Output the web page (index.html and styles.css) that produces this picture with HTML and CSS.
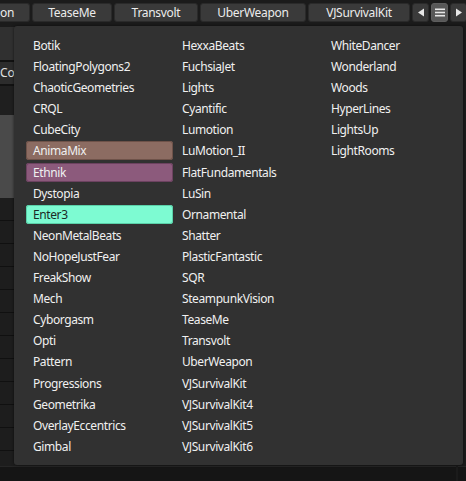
FILE: index.html
```html
<!DOCTYPE html>
<html>
<head>
<meta charset="utf-8">
<link rel="stylesheet" href="styles.css">
</head>
<body>
<div class="app">
  <div class="tabbar">
    <div class="tab tab-cut">on</div>
    <div class="tab w-tease">TeaseMe</div>
    <div class="tab w-trans">Transvolt</div>
    <div class="tab w-uber">UberWeapon</div>
    <div class="tab w-vj">VJSurvivalKit</div>
    <div class="tab icon-btn"><svg width="8" height="9" viewBox="0 0 8 9"><path d="M7 0.5 L1 4.5 L7 8.5 Z" fill="#e8e8e8"/></svg></div>
    <div class="tab icon-btn active"><svg width="10" height="9" viewBox="0 0 10 9"><rect x="0" y="0.5" width="10" height="1.6" fill="#e8e8e8"/><rect x="0" y="3.7" width="10" height="1.6" fill="#e8e8e8"/><rect x="0" y="6.9" width="10" height="1.6" fill="#e8e8e8"/></svg></div>
    <div class="tab icon-btn"><svg width="8" height="9" viewBox="0 0 8 9"><path d="M1 0.5 L7 4.5 L1 8.5 Z" fill="#e8e8e8"/></svg></div>
  </div>
  <div class="main">
    <div class="side">
      <div class="sec sec-a"></div>
      <div class="sec sec-b">Cor</div>
      <div class="sec sec-c"></div>
      <div class="sec sec-d"></div>
      <div class="rows">
        <div class="row"></div><div class="row"></div><div class="row"></div><div class="row"></div>
        <div class="row"></div><div class="row"></div><div class="row"></div><div class="row"></div>
        <div class="row"></div><div class="row"></div><div class="row"></div><div class="row"></div>
      </div>
    </div>
    <div class="content"></div>
  </div>
  <div class="bottom"><div class="bottom-bar"></div><div class="bottom-end"></div></div>

  <div class="popup">
    <div class="item">Botik</div>
    <div class="item">FloatingPolygons2</div>
    <div class="item">ChaoticGeometries</div>
    <div class="item">CRQL</div>
    <div class="item">CubeCity</div>
    <div class="item hl-anima">AnimaMix</div>
    <div class="item hl-ethnik">Ethnik</div>
    <div class="item">Dystopia</div>
    <div class="item hl-enter">Enter3</div>
    <div class="item">NeonMetalBeats</div>
    <div class="item">NoHopeJustFear</div>
    <div class="item">FreakShow</div>
    <div class="item">Mech</div>
    <div class="item">Cyborgasm</div>
    <div class="item">Opti</div>
    <div class="item">Pattern</div>
    <div class="item">Progressions</div>
    <div class="item">Geometrika</div>
    <div class="item">OverlayEccentrics</div>
    <div class="item">Gimbal</div>

    <div class="item">HexxaBeats</div>
    <div class="item">FuchsiaJet</div>
    <div class="item">Lights</div>
    <div class="item">Cyantific</div>
    <div class="item">Lumotion</div>
    <div class="item">LuMotion_II</div>
    <div class="item">FlatFundamentals</div>
    <div class="item">LuSin</div>
    <div class="item">Ornamental</div>
    <div class="item">Shatter</div>
    <div class="item">PlasticFantastic</div>
    <div class="item">SQR</div>
    <div class="item">SteampunkVision</div>
    <div class="item">TeaseMe</div>
    <div class="item">Transvolt</div>
    <div class="item">UberWeapon</div>
    <div class="item">VJSurvivalKit</div>
    <div class="item">VJSurvivalKit4</div>
    <div class="item">VJSurvivalKit5</div>
    <div class="item">VJSurvivalKit6</div>

    <div class="item">WhiteDancer</div>
    <div class="item">Wonderland</div>
    <div class="item">Woods</div>
    <div class="item">HyperLines</div>
    <div class="item">LightsUp</div>
    <div class="item">LightRooms</div>
  </div>
</div>
</body>
</html>
```
FILE: styles.css
```css
html, body {
  margin: 0;
  padding: 0;
  background: #1b1b1b;
  width: 466px;
  height: 481px;
  overflow: hidden;
}
body {
  font-family: "Noto Sans", "Open Sans", sans-serif;
  font-size: 12px;
  color: #e6e6e6;
}
.app {
  position: relative;
  width: 466px;
  height: 481px;
  display: flex;
  flex-direction: column;
}
.tabbar {
  display: flex;
  gap: 2px;
  height: 20px;
  padding-top: 3px;
  padding-bottom: 2px;
  background: #1b1b1b;
}
.tab {
  flex: none;
  height: 19px;
  background: #3a3a3a;
  border: 1px solid #2a2a2a;
  border-radius: 3px;
  box-sizing: border-box;
  display: flex;
  align-items: center;
  justify-content: center;
  color: #ececec;
  font-size: 12px;
  letter-spacing: -0.3px;
  line-height: 1;
}
.tab-cut {
  width: 30px;
  justify-content: flex-start;
  border-radius: 0 3px 3px 0;
  border-left: none;
}
.w-tease { width: 80px; }
.w-trans { width: 84px; }
.w-uber { width: 106px; }
.w-vj { width: 102px; }
.icon-btn { width: 17px; }
.icon-btn.active { background: #585858; border-color: #5e5e5e; }

.main {
  display: flex;
  flex: 1;
  margin-top: 2px;
}
.side {
  width: 40px;
  display: flex;
  flex-direction: column;
}
.sec-a { height: 33px; background: #303030; border-bottom: 2px solid #121212; }
.sec-b {
  height: 22px;
  background: #2c2c2c;
  line-height: 22px;
  font-size: 12px;
  color: #e0e0e0;
  border-bottom: 2px solid #121212;
}
.sec-c { height: 29px; background: #1f1f1f; }
.sec-d { height: 83px; background: #4a4a4a; }
.rows { display: flex; flex-direction: column; }
.row { height: 22px; background: #1d1d1d; border-bottom: 1px solid #101010; }
.content { flex: 1; background: #1b1b1b; }
.bottom {
  position: absolute;
  left: 0;
  right: 0;
  bottom: 0;
  height: 15px;
  display: flex;
  gap: 2px;
}
.bottom-bar { flex: 1; background: #151515; border-top: 1px solid #262626; }
.bottom-end { width: 8px; background: #151515; border-top: 1px solid #262626; }

.popup {
  position: absolute;
  left: 14px;
  top: 26px;
  width: 449px;
  height: 439px;
  box-sizing: border-box;
  padding: 10px 12px 10px 12px;
  background: #313131;
  border-radius: 3px;
  box-shadow: 0 0 3px rgba(0,0,0,0.6);
  display: grid;
  grid-template-columns: repeat(3, 147px);
  grid-template-rows: repeat(20, 19px);
  grid-auto-flow: column;
  column-gap: 2px;
  row-gap: 2.1px;
  align-content: start;
}
.item {
  padding-left: 7px;
  line-height: 19px;
  font-size: 12px;
  letter-spacing: -0.4px;
  color: #f0f0f0;
  border-radius: 3px;
  white-space: nowrap;
}
.hl-anima { background: #8c6c62; box-shadow: inset 0 0 0 1px #6e5249; }
.hl-ethnik { background: #8c5a7c; box-shadow: inset 0 0 0 1px #6c4260; }
.hl-enter { background: #7dfbd2; color: #1c2a26; box-shadow: inset 0 0 0 1px #5ad0a8; }
```
